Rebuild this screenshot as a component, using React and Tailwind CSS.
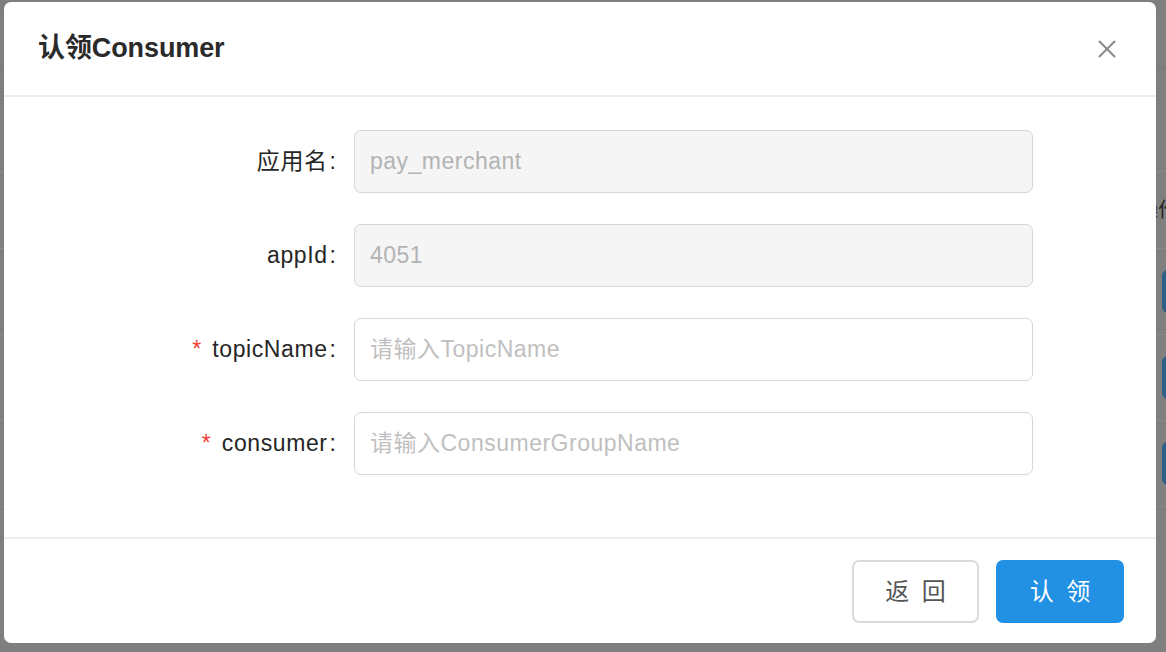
import React, { useState } from 'react';
import { X } from 'lucide-react';

const font = { fontFamily: '"Liberation Sans", "Noto Sans CJK SC", sans-serif' };

const rows = [
    { label: '应用名', value: 'pay_merchant', disabled: true },
    { label: 'appId', value: '4051', disabled: true },
    { label: 'topicName', placeholder: '请输入TopicName', required: true },
    { label: 'consumer', placeholder: '请输入ConsumerGroupName', required: true },
];

function BackgroundPage() {
    // the list page behind the dimmed mask, only its edges are visible
    return (
        <div className="h-full w-full bg-[#7f7f7f] flex flex-col overflow-hidden">
            <div className="h-[68px] border-b border-[#767676]" />
            <div className="h-[104px] border-b border-[#8a8a8a]" />
            <div className="h-[77px] border-b border-[#8a8a8a] flex items-center justify-end overflow-hidden">
                <span className="mr-[-12px] text-[20px] text-[#222]">操作</span>
            </div>
            {[0, 1, 2].map((i) => (
                <div key={i} className="h-[86px] border-b border-[#8a8a8a] flex items-center justify-between overflow-hidden">
                    <span className="ml-[-10px] text-[20px] text-[#333]">{i === 2 ? 'r' : ''}</span>
                    <div className="shrink-0 w-[60px] h-[43px] mr-[-56px] rounded-[6px] bg-[#2e5f86]" />
                </div>
            ))}
        </div>
    );
}

export default function App() {
    const [topic, setTopic] = useState('');
    const [consumer, setConsumer] = useState('');
    const values = { topicName: topic, consumer };
    const setters = { topicName: setTopic, consumer: setConsumer };

    return (
        <div className="relative w-[1166px] h-[652px] overflow-hidden" style={font}>
            <BackgroundPage />

            {/* Modal */}
            <div className="absolute left-[4px] top-[2px] w-[1152px] h-[641px] bg-white rounded-[7px] flex flex-col">
                <div className="h-[95px] shrink-0 px-[34px] flex items-center justify-between border-b-2 border-[#ededed]">
                    <h2 className="text-[27px] font-bold text-[#2a2a2a] tracking-[-0.1px]">认领Consumer</h2>
                    <button className="w-[40px] h-[40px] -mr-[5px] flex items-center justify-center text-[#8a8a8a]">
                        <X size={30} strokeWidth={1.6} />
                    </button>
                </div>

                <div className="pt-[33px] pb-[62px] flex flex-col gap-[31px]">
                    {rows.map((r) => (
                        <div key={r.label} className="grid grid-cols-[334px_679px] gap-x-[16px] items-center">
                            <label className="flex items-center justify-end text-[23px] text-[#262626]">
                                {r.required && <span className="text-[#f04134] mr-[11px] text-[23px]">*</span>}
                                <span className="tracking-[0.6px]">{r.label}</span>
                                <span className="ml-[2px] mr-[2px]">:</span>
                            </label>
                            {r.disabled ? (
                                <input
                                    disabled
                                    value={r.value}
                                    readOnly
                                    className="h-[63px] w-full rounded-[7px] border border-[#d6d6d6] bg-[#f5f5f5] px-[15px] text-[23px] tracking-[0.5px] text-[#b3b3b3] outline-none"
                                    style={font}
                                />
                            ) : (
                                <input
                                    value={values[r.label]}
                                    onChange={(e) => setters[r.label](e.target.value)}
                                    placeholder={r.placeholder}
                                    className="h-[63px] w-full rounded-[7px] border border-[#d6d6d6] bg-white px-[15px] text-[23px] tracking-[0.5px] text-[#333] placeholder:text-[#bfbfbf] outline-none focus:border-[#2291e4]"
                                    style={font}
                                />
                            )}
                        </div>
                    ))}
                </div>

                <div className="border-t-2 border-[#ededed] pt-[21px] pb-[20px] pr-[32px] flex justify-end gap-[17px]">
                    <button className="w-[127px] h-[63px] rounded-[7px] border-2 border-[#dadada] bg-white text-[24px] text-[#555] tracking-[3px] pl-[3px]">
                        返 回
                    </button>
                    <button className="w-[128px] h-[63px] rounded-[7px] bg-[#2291e4] text-[24px] text-white tracking-[3px] pl-[3px]">
                        认 领
                    </button>
                </div>
            </div>
        </div>
    );
}
